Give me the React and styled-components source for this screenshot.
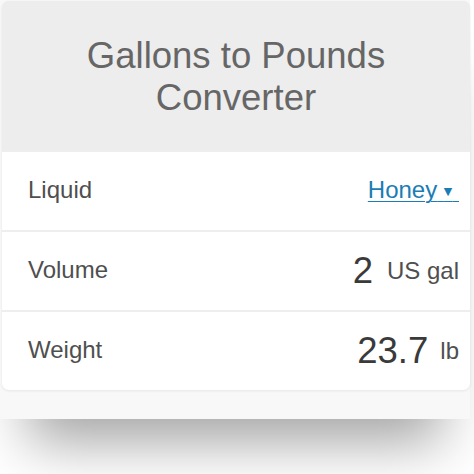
import React from 'react';
import styled, { createGlobalStyle } from 'styled-components';

const GlobalStyle = createGlobalStyle`
    body {
        margin: 0;
        background: #ffffff;
        font-family: "Liberation Sans", Arial, sans-serif;
    }
`

const rows = [
    { label: 'Liquid', select: 'Honey' },
    { label: 'Volume', value: '2', unit: 'US gal', unitGap: 14 },
    { label: 'Weight', value: '23.7', unit: 'lb', unitGap: 12 },
];

const App = () => {
    return (
        <>
            <GlobalStyle />
            <Page>
                <Frame>
                    <Card>
                        <Header>
                            <h1>Gallons to Pounds<br />Converter</h1>
                        </Header>
                        {rows.map((row) => (
                            <Row key={row.label}>
                                <Label>{row.label}</Label>
                                {row.select ? (
                                    <Select>
                                        {row.select}{' '}
                                        <span className='caret'>▼</span>
                                        {'\u00a0'}
                                    </Select>
                                ) : (
                                    <Value>
                                        <span className='number'>{row.value}</span>
                                        <Unit $gap={row.unitGap}>{row.unit}</Unit>
                                    </Value>
                                )}
                            </Row>
                        ))}
                    </Card>
                </Frame>
            </Page>
        </>
    );
}

export default App;

const Page = styled.div`
    height: 474px;
    background: #ffffff;
`

const Frame = styled.div`
    position: relative;
    width: 470px;
    padding: 1px 0 29px 0;
    background: #f8f8f8;
    box-shadow: 0 51px 53px -28px rgba(0, 0, 0, 0.36);
`

const Card = styled.div`
    margin-left: 2px;
    width: 468px;
    display: flex;
    flex-direction: column;
    gap: 2px;
    background: #eeeeee;
    border-radius: 7px;
    overflow: hidden;
    box-shadow: 0 1px 3px rgba(0, 0, 0, 0.08);
`

const Header = styled.div`
    height: 149px;
    box-sizing: border-box;
    padding-top: 34px;
    background: #ededed;
    text-align: center;

    h1 {
        margin: 0;
        font-size: 36.5px;
        line-height: 42px;
        font-weight: 400;
        color: #666666;
    }
`

const Row = styled.div`
    height: 78px;
    display: flex;
    align-items: center;
    justify-content: space-between;
    padding: 0 11px 0 26px;
    background: #ffffff;
`

const Label = styled.span`
    font-size: 24px;
    color: #4f4f4f;
    margin-top: -2px;
`

const Select = styled.span`
    margin-top: -2px;
    font-size: 24px;
    color: #1b7db3;
    text-decoration: underline;
    text-decoration-thickness: 1px;
    text-underline-offset: 3px;

    .caret {
        font-family: "DejaVu Sans", sans-serif;
        font-size: 11px;
        vertical-align: 3px;
    }
`

const Value = styled.div`
    display: flex;
    align-items: center;

    .number {
        font-size: 36.5px;
        color: #3a3a3a;
    }
`

const Unit = styled.span`
    margin-left: ${(p) => p.$gap}px;
    font-size: 24px;
    color: #4f4f4f;
`
